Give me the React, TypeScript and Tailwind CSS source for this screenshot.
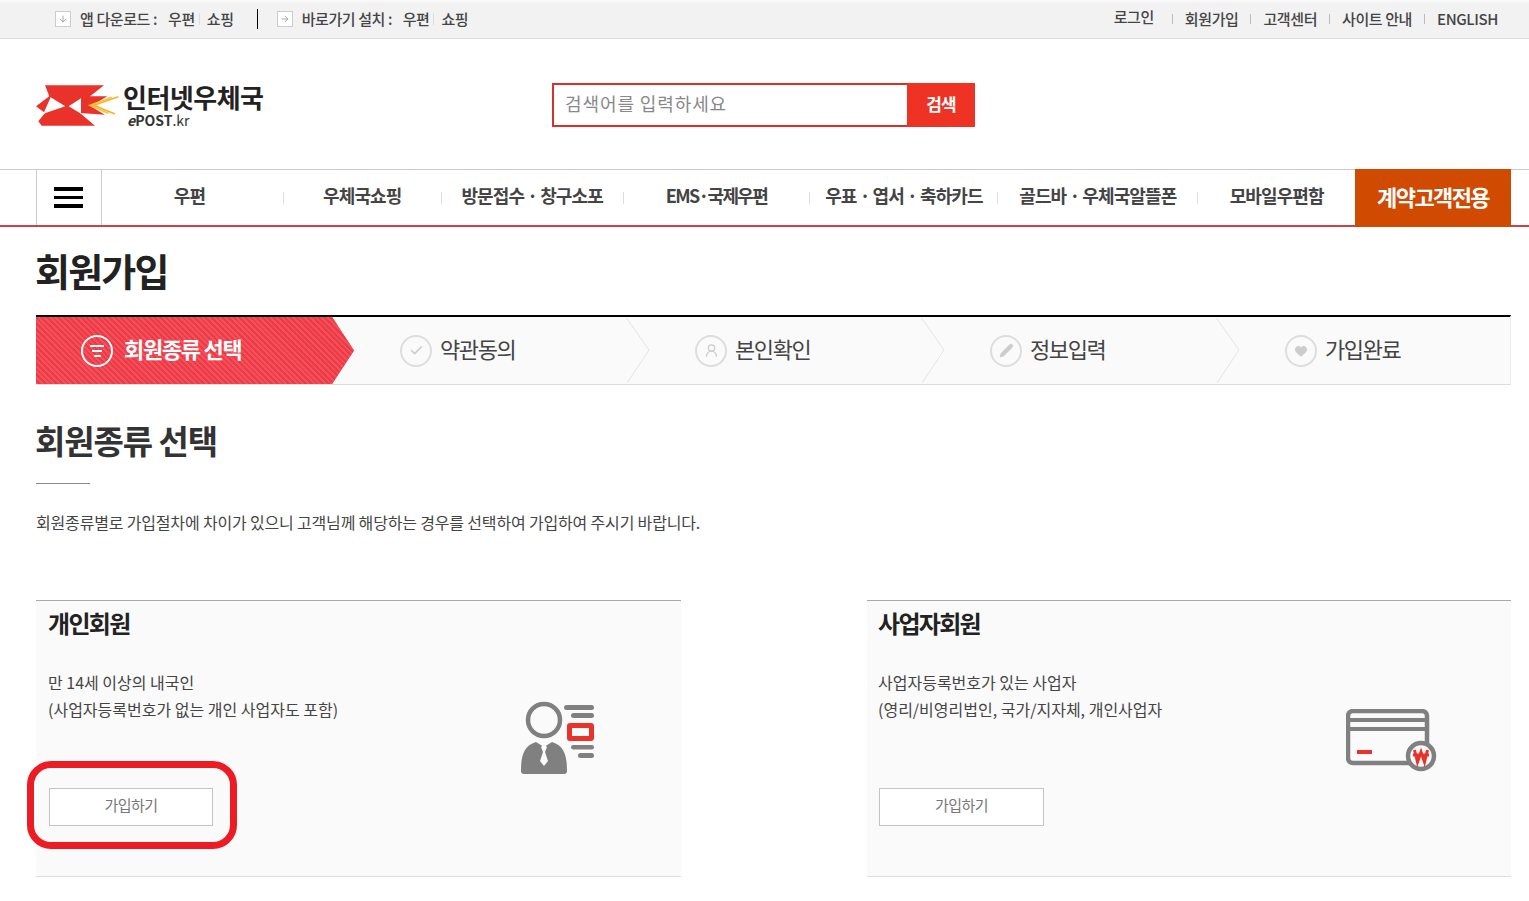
import { ArrowDown, ArrowRight, Check, Heart, Pencil, UserRound } from 'lucide-react'
import type { ReactNode } from 'react'

const NAV_ITEMS = [
  { label: '우편', width: 'w-[182px]', tracking: 'tracking-[-0.9px] pr-[6px]' },
  { label: '우체국쇼핑', width: 'w-[158px]', tracking: 'tracking-[-0.9px]' },
  { label: '방문접수 · 창구소포', width: 'w-[182px]', tracking: 'tracking-[-0.9px]' },
  { label: 'EMS·국제우편', width: 'w-[187px]', tracking: 'tracking-[-1.6px]' },
  { label: '우표 · 엽서 · 축하카드', width: 'w-[188px]', tracking: 'tracking-[-0.9px]' },
  { label: '골드바 · 우체국알뜰폰', width: 'w-[200px]', tracking: 'tracking-[-0.9px]' },
]

const TOP_LINKS = ['회원가입', '고객센터', '사이트 안내', 'ENGLISH']

const STEPS: { label: string; icon: ReactNode }[] = [
  { label: '약관동의', icon: <Check size={15} strokeWidth={2.5} /> },
  { label: '본인확인', icon: <UserRound size={15} strokeWidth={2} /> },
  { label: '정보입력', icon: <Pencil size={15} fill="currentColor" strokeWidth={1.5} /> },
  { label: '가입완료', icon: <Heart size={14} fill="currentColor" strokeWidth={1} /> },
]

function Logo() {
  return (
    <svg viewBox="108 250 255 135" className="w-[85px] h-[45px] shrink-0 mt-[3px]">
      <polygon
        points="135,257 312,257 270,290 322,290 272,320 315,345 240,340 285,378 125,378 115,365 135,340 108,320 148,290"
        fill="#e9322a"
      />
      <polygon points="152,293 196,320 130,342" fill="#fff" />
      <polygon points="243,296 243,342 206,320" fill="#fff" />
      <polyline points="355,291 282,317 345,343" fill="none" stroke="#f5b324" strokeWidth="5" />
      <polyline points="335,293 270,317 325,341" fill="none" stroke="#f5c13f" strokeWidth="5" />
    </svg>
  )
}

function PersonIcon() {
  return (
    <svg viewBox="0 0 75 75" className="w-[75px] h-[75px]">
      <circle cx="23" cy="19" r="16" fill="none" stroke="#808080" strokeWidth="4.500" />
      <path d="M0 70c0-14 2-25 15-29l8 5 8-5c13 4 15 15 15 29 0 2-1 3-3 3H3c-2 0-3-1-3-3z" fill="#808080" />
      <path d="M23 43l-3 3 2 5-3 9 4 5 4-5-3-9 2-5z" fill="#fafafa" />
      <rect x="43" y="4" width="30" height="5" rx="2.500" fill="#808080" />
      <rect x="50" y="12" width="23" height="5" rx="2.500" fill="#808080" />
      <rect x="48.500" y="24.500" width="22" height="13" fill="none" stroke="#e9322a" strokeWidth="5" rx="0.500" />
      <rect x="50" y="44" width="23" height="4.500" rx="2.200" fill="#808080" />
      <rect x="57" y="52" width="16" height="5" rx="2.500" fill="#808080" />
    </svg>
  )
}

function CardIcon() {
  return (
    <svg viewBox="0 0 92 64" className="w-[92px] h-[64px]">
      <rect x="2" y="2" width="79" height="52" rx="5" fill="none" stroke="#808080" strokeWidth="4.500" />
      <path d="M2 11h79M2 20h79" stroke="#808080" strokeWidth="4" />
      <path d="M11 43h15" stroke="#e9322a" strokeWidth="4" />
      <circle cx="75" cy="47" r="13" fill="#fafafa" stroke="#808080" strokeWidth="4.500" />
      <path d="M68.500 41l3 12 3.500-10 3.500 10 3-12M67 46h16" fill="none" stroke="#e9322a" strokeWidth="3" />
    </svg>
  )
}

type MemberCardProps = {
  title: string
  lines: string[]
  icon: ReactNode
  iconClass: string
  widthClass: string
  padClass: string
  buttonClass: string
}

function MemberCard({ title, lines, icon, iconClass, widthClass, padClass, buttonClass }: MemberCardProps) {
  return (
    <div className={`${widthClass} h-[277px] flex justify-between bg-[#fafafa] border-t border-b border-t-[#aaaaaa] border-b-[#dddddd]`}>
      <div className={padClass}>
        <h3 className="mt-1.5 text-[24px] leading-[32px] font-bold tracking-[-1.7px] text-[#222]">{title}</h3>
        <div className="mt-[30px] text-[16px] leading-[27px] tracking-[0px] text-[#444]">
          {lines.map((l) => (
            <p key={l}>{l}</p>
          ))}
        </div>
        <button className={`block mt-[65px] ml-px ${buttonClass} h-[38px] pb-1 bg-white border border-[#c4c4c4] text-[15px] tracking-[-0.5px] text-[#777]`}>
          가입하기
        </button>
      </div>
      <div className={iconClass}>{icon}</div>
    </div>
  )
}

export default function App() {
  return (
    <div className="relative h-[900px] overflow-hidden bg-white font-['Noto_Sans_CJK_KR',sans-serif]">
      {/* top utility bar */}
      <div className="h-[39px] flex items-center justify-between bg-[#f2f2f2] border-t-2 border-t-[#f8f8f8] border-b border-b-[#dddddd] pb-0.5 pl-[55px] pr-[31px] text-[15px] font-medium tracking-[-0.4px] text-[#444]">
        <div className="flex items-center">
          <span className="w-4 h-4 mr-[9px] flex items-center justify-center border border-[#cccccc] bg-white text-[#999]">
            <ArrowDown size={10} />
          </span>
          <span className="w-[88px]">앱 다운로드 :</span>
          <span>우편</span>
          <span className="w-px h-3 bg-[#dddddd] mx-1" />
          <span className="ml-[3px]">쇼핑</span>
          <span className="w-px h-5 bg-black ml-[23px] mr-[19px]" />
          <span className="w-4 h-4 mr-[9px] flex items-center justify-center border border-[#cccccc] bg-white text-[#999]">
            <ArrowRight size={10} />
          </span>
          <span className="w-[101px]">바로가기 설치 :</span>
          <span>우편</span>
          <span className="w-px h-3 bg-[#dddddd] mx-1" />
          <span className="ml-[3px]">쇼핑</span>
        </div>
        <div className="flex items-center">
          <span className="-mt-1">로그인</span>
          {TOP_LINKS.map((l, i) => (
            <span key={l} className="flex items-center">
              <span className={`w-px h-2.5 bg-[#bbbbbb] ${i === 0 ? 'ml-[18px]' : 'ml-[12px]'} mr-[12px]`} />
              {l}
            </span>
          ))}
        </div>
      </div>

      {/* logo and search */}
      <div className="h-[130px] flex items-center pl-9">
        <Logo />
        <div className="ml-[2px] w-[429px] mt-[2px]">
          <div className="text-[26px] leading-[28px] font-bold tracking-[-0.5px] text-[#222]">인터넷우체국</div>
          <div className="mt-[2px] ml-[4px] text-[14px] leading-[14px] font-bold text-[#333]">
            <i>e</i>POST<span className="font-normal">.kr</span>
          </div>
        </div>
        <div className="flex w-[423px] h-[44px] mt-[2px]">
          <input
            placeholder="검색어를 입력하세요"
            className="flex-1 min-w-0 border-2 border-r-0 border-[#d9302a] pl-[11px] pr-3 pb-1 text-[18px] tracking-[0.9px] placeholder:text-[#888888] outline-none"
          />
          <div className="w-[68px] pb-0.5 flex items-center justify-center bg-[#ee3224] text-white text-[17px] font-bold tracking-[-1px]">
            검색
          </div>
        </div>
      </div>

      {/* main navigation */}
      <div className="h-[58px] flex pl-9 pr-[18px] border-t border-t-[#cccccc] border-b-2 border-b-[#c94444] text-[#333]">
        <div className="w-[66px] flex flex-col items-center justify-center gap-[5px] border-l border-r border-[#cccccc]">
          <span className="w-[29px] h-[3.5px] bg-black" />
          <span className="w-[29px] h-[3.5px] bg-black" />
          <span className="w-[29px] h-[3.5px] bg-black" />
        </div>
        {NAV_ITEMS.map((n) => (
          <div key={n.label} className={`${n.width} flex items-center`}>
            <span className={`flex-1 pb-1 text-center text-[18px] font-bold ${n.tracking} whitespace-nowrap text-[#444]`}>{n.label}</span>
            <span className="w-px h-3 bg-[#dddddd]" />
          </div>
        ))}
        <div className="w-[157px] pb-1 flex items-center justify-center text-[18px] font-bold tracking-[-0.9px] text-[#444]">모바일우편함</div>
        <div className="w-[156px] -mt-px -mb-0.5 pb-1 flex items-center justify-center bg-[#d04a02] text-white text-[22px] font-bold tracking-[-1.6px]">
          계약고객전용
        </div>
      </div>

      <div className="px-9 pr-[18px]">
        <div className="h-[88px] pb-1 flex items-center">
          <h1 className="text-[38px] font-bold tracking-[-1.8px] -ml-px text-[#222]">회원가입</h1>
        </div>

        {/* step bar */}
        <div className="h-[70px] flex bg-[#fafafa] border-t-2 border-t-black border-b border-b-[#dddddd] border-r border-r-[#eeeeee]">
          <div className="relative z-10 w-[318px] shrink-0 flex items-center pl-[45px] gap-[11px] text-white bg-[#f04050] bg-[repeating-linear-gradient(45deg,#f4505c_0,#f4505c_2px,#ec3a46_2px,#ec3a46_4px)] [clip-path:polygon(0_0,296px_0,318px_50%,296px_100%,0_100%)]">
            <span className="w-8 h-8 rounded-full border-[2.5px] border-white flex flex-col items-center justify-center gap-[3px]">
              <span className="w-[14px] h-0.5 bg-white" />
              <span className="w-[10px] h-0.5 bg-white" />
              <span className="w-[7px] h-0.5 bg-white" />
            </span>
            <span className="-mt-1 text-[22px] font-bold tracking-[-1.300px]">회원종류 선택</span>
          </div>
          {STEPS.map((s, i) => (
            <div key={s.label} className={`relative flex items-center shrink-0 ${i === 0 ? 'w-[273px] pl-[46px]' : 'w-[295px] pl-[68px]'} gap-2`}>
              <span className="w-8 h-8 rounded-full border-[2.5px] border-[#dddddd] flex items-center justify-center text-[#cccccc]">{s.icon}</span>
              <span className="-mt-1 text-[22px] tracking-[-1.4px] text-[#444]">{s.label}</span>
              {i < 3 && (
                <svg viewBox="0 0 24 66" className="absolute -right-[23px] top-0 w-6 h-[66px] fill-none stroke-[#e4e4e4]">
                  <polyline points="0.5,1 23,33 1,66" />
                </svg>
              )}
            </div>
          ))}
        </div>

        <h2 className="mt-[31px] -ml-px text-[33px] leading-[48px] font-bold tracking-[-1.100px] text-[#333]">회원종류 선택</h2>
        <div className="mt-[19px] w-[54px] h-px bg-[#888888]" />
        <p className="mt-[27px] text-[16px] leading-[22px] tracking-[-0.17px] text-[#444]">
          회원종류별로 가입절차에 차이가 있으니 고객님께 해당하는 경우를 선택하여 가입하여 주시기 바랍니다.
        </p>

        <div className="mt-[67px] flex justify-between">
          <MemberCard
            title="개인회원"
            widthClass="w-[645px]"
            padClass="pl-3"
            buttonClass="w-[164px]"
            lines={['만 14세 이상의 내국인', '(사업자등록번호가 없는 개인 사업자도 포함)']}
            icon={<PersonIcon />}
            iconClass="mt-[100px] mr-[85px]"
          />
          <MemberCard
            title="사업자회원"
            widthClass="w-[644px]"
            padClass="pl-[11px]"
            buttonClass="w-[165px]"
            lines={['사업자등록번호가 있는 사업자', '(영리/비영리법인, 국가/지자체, 개인사업자']}
            icon={<CardIcon />}
            iconClass="mt-[108px] mr-[73px]"
          />
        </div>
      </div>

      {/* hand drawn highlight over the first button */}
      <div className="absolute left-[27px] top-[761px] w-[210px] h-[88px] border-[7px] border-[#ed1c24] rounded-[24px]" />
    </div>
  )
}
